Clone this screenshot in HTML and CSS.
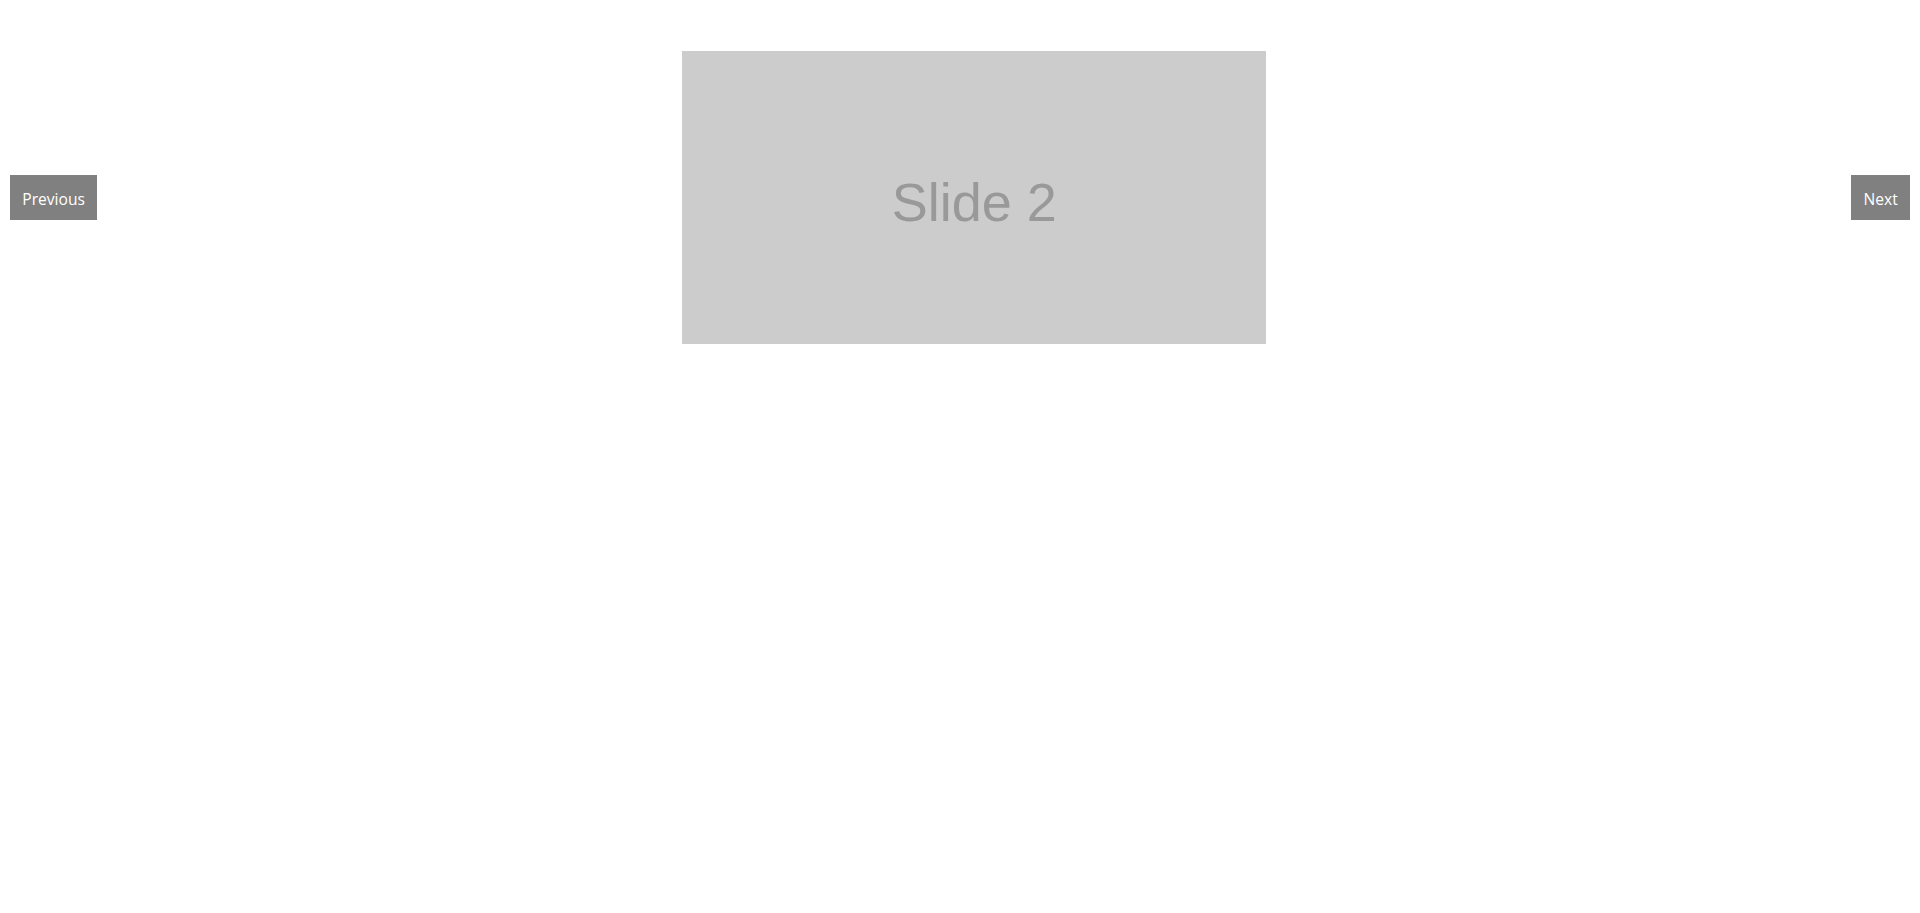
FILE: index.html
```html
<!DOCTYPE html>
<html>
<head>
<meta charset="utf-8">
<link rel="stylesheet" href="styles.css">
</head>
<body>
<div class="carousel">
  <button class="nav">Previous</button>
  <div class="viewport">
    <div class="slide">Slide 2</div>
  </div>
  <button class="nav">Next</button>
</div>
</body>
</html>
```
FILE: styles.css
```css
html, body {
  margin: 0;
  padding: 0;
  background: #fff;
}
.carousel {
  display: flex;
  align-items: center;
  padding: 51px 10px 0 10px;
}
.nav {
  background: #808080;
  color: #fff;
  border: none;
  font-family: "Open Sans", sans-serif;
  font-size: 15.6px;
  height: 45px;
  padding: 2px 12.3px 0 12.3px;
  margin: 0;
}
.viewport {
  flex: 1;
  display: flex;
  justify-content: center;
}
.slide {
  width: 584px;
  height: 293px;
  background: #ccc;
  color: #999;
  font-family: "Liberation Sans", Arial, sans-serif;
  font-size: 54px;
  display: flex;
  align-items: center;
  justify-content: center;
  padding-top: 9px;
  box-sizing: border-box;
}
```
